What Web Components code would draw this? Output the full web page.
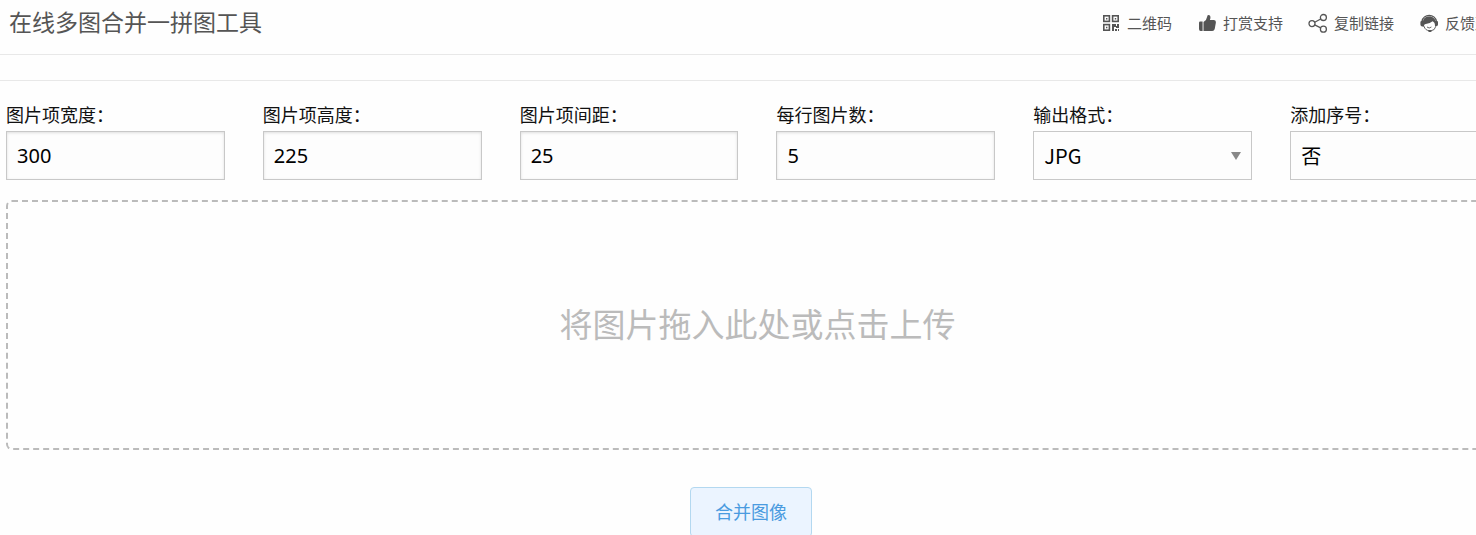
<!DOCTYPE html>
<html lang="zh-CN">
<head>
<meta charset="utf-8">
<meta name="viewport" content="width=device-width, initial-scale=1">
<title>在线多图合并一拼图工具</title>
<style>
    html{
        scrollbar-width : none;
    }
    body{
        margin : 0;
        overflow-x : clip;
        background-color : #fefefe;
        color : #111111;
        font-family : "Noto Sans", "Noto Sans CJK SC", sans-serif;
    }
</style>
</head>
<body>

<merge-page>
    <tool-header slot="header" label="在线多图合并一拼图工具">
        <tool-link icon="qrcode">二维码</tool-link>
        <tool-link icon="thumb">打赏支持</tool-link>
        <tool-link icon="share">复制链接</tool-link>
        <tool-link icon="service">反馈建议</tool-link>
    </tool-header>
    <tool-field slot="fields" label="图片项宽度：" value="300"></tool-field>
    <tool-field slot="fields" label="图片项高度：" value="225"></tool-field>
    <tool-field slot="fields" label="图片项间距：" value="25"></tool-field>
    <tool-field slot="fields" label="每行图片数：" value="5"></tool-field>
    <tool-field slot="fields" label="输出格式：" options="JPG,PNG"></tool-field>
    <tool-field slot="fields" label="添加序号：" options="否,是"></tool-field>
    <drop-zone>将图片拖入此处或点击上传</drop-zone>
    <action-button slot="actions">合并图像</action-button>
</merge-page>

<script>
"use strict";

const icons = {
    qrcode: `
        <g fill="none" stroke="currentColor" stroke-width="1.6">
            <rect x="2.8" y="2.8" width="5.6" height="5.6"/>
            <rect x="11.6" y="2.8" width="5.6" height="5.6"/>
            <rect x="2.8" y="11.6" width="5.6" height="5.6"/>
        </g>
        <path fill="currentColor" d="M5 5h1.4v1.4H5zM13.8 5h1.4v1.4h-1.4zM5 13.800h1.400v1.400H5zM11 11h4v2h1v-2h2v4h-3v-1h-2v4h-2zM14 16h2v2h-2zM17 16h1v2h-1z"/>`,
    thumb: `
        <path fill="currentColor" d="M2.8 8.500h2.800v9.500H3.600Q2 18 2 16V10Q2 8.500 2.800 8.500zM6.500 9Q9.800 7 10.200 3.400Q10.400 2 11.600 2Q13.800 2.300 13.400 5.200L12.900 7H17Q19.200 7.200 18.900 9.600L17.700 16Q17.200 18 15.200 18H6.500z"/>`,
    share: `
        <g fill="none" stroke="currentColor" stroke-width="1.3">
            <circle cx="4" cy="10.600" r="3"/>
            <circle cx="15.400" cy="4.500" r="3"/>
            <circle cx="15.400" cy="16.200" r="3"/>
            <path d="M6.700 9.300l6-3.300M6.700 11.800l6 3"/>
        </g>`,
    service: `
        <path fill="none" stroke="currentColor" stroke-width="1.400" d="M3 8.500C4 .5 16.400 .5 17.400 8.500"/>
        <path fill="currentColor" d="M10.200 3.600C14 3.600 16 5.800 16.400 8H18Q19 8 19 9.200V11.400Q19 13 17.400 13H16C16 11.500 15.800 10 14.600 9L13.600 8.200Q10.800 10.800 5.800 11.200Q4.800 12 5 13.400H3Q1.400 13 1.400 11.400V9.200Q1.400 8 2.600 8H4C4.500 5.400 6.500 3.600 10.200 3.600z"/>
        <path fill="none" stroke="currentColor" stroke-width=".9" d="M4.800 13C6 16.500 8 17.600 10.200 17.600M8 14Q10.200 16 12.400 14M17 13Q16 17.500 11.500 18"/>
        <rect x="9.200" y="16.900" width="3.400" height="2" rx="1" fill="currentColor"/>`
};

class MergePage extends HTMLElement {
    constructor() {
        super();
        this.attachShadow({ mode: "open" });
        this.shadowRoot.innerHTML = `
            <style>
                /* the tool is slightly wider than the window */
                :host{
                    display : block;
                    width : calc(100% + 33px);
                }
                .band{
                    height : 25px;
                    border-bottom : 1px solid #e8e8e8;
                }
                main{
                    display : flex;
                    flex-direction : column;
                    gap : 20px;
                    padding : 21px 0 20px 6px;
                }
                .fields{
                    display : grid;
                    grid-template-columns : repeat(6, minmax(0, 1fr));
                    gap : 38px;
                }
                .actions{
                    display : flex;
                    justify-content : center;
                    padding : 17px 13px 0 0;
                }
            </style>
            <slot name="header"></slot>
            <div class="band"></div>
            <main>
                <div class="fields"><slot name="fields"></slot></div>
                <slot></slot>
                <div class="actions"><slot name="actions"></slot></div>
            </main>
        `;
    }
}

class ToolHeader extends HTMLElement {
    constructor() {
        super();
        this.attachShadow({ mode: "open" });
        this.shadowRoot.innerHTML = `
            <style>
                :host{
                    display : block;
                    color : #555555;
                    border-bottom : 1px solid #e8e8e8;
                }
                header{
                    display : flex;
                    justify-content : space-between;
                    align-items : flex-start;
                    height : 41px;
                    padding : 13px 4px 0 9px;
                }
                h1{
                    margin : 0;
                    font-size : 23px;
                    line-height : 18px;
                    font-weight : 400;
                }
                nav{
                    display : flex;
                    gap : 25px;
                }
            </style>
            <header>
                <h1></h1>
                <nav><slot></slot></nav>
            </header>
        `;
    }
    connectedCallback() {
        this.shadowRoot.querySelector("h1").textContent = this.getAttribute("label");
    }
}

class ToolLink extends HTMLElement {
    constructor() {
        super();
        this.attachShadow({ mode: "open" });
        this.shadowRoot.innerHTML = `
            <style>
                :host{
                    display : block;
                }
                a{
                    display : flex;
                    align-items : center;
                    gap : 6px;
                    color : inherit;
                    font-size : 15px;
                    line-height : 20px;
                    white-space : nowrap;
                    text-decoration : none;
                }
                svg{
                    width : 20px;
                    height : 20px;
                }
            </style>
            <a href="#"><svg viewBox="0 0 20 20" aria-hidden="true"></svg><slot></slot></a>
        `;
    }
    connectedCallback() {
        this.shadowRoot.querySelector("svg").innerHTML = icons[this.getAttribute("icon")];
    }
}

// text box, or a drop-down when "options" is given
class ToolField extends HTMLElement {
    constructor() {
        super();
        this.attachShadow({ mode: "open" });
        this.shadowRoot.innerHTML = `
            <style>
                :host{
                    display : block;
                    min-width : 0;
                }
                label{
                    display : block;
                    padding-bottom : 2px;
                    font-size : 18px;
                    line-height : 27px;
                }
                .control{
                    display : grid;
                    align-items : center;
                }
                input, select{
                    grid-area : 1 / 1;
                    box-sizing : border-box;
                    width : 100%;
                    height : 49px;
                    margin : 0;
                    padding : 0 10px;
                    border : 1px solid #c8c8c8;
                    border-radius : 0;
                    background-color : #fdfdfd;
                    color : #000000;
                    font-family : inherit;
                    font-size : 20px;
                    appearance : none;
                }
                input{
                    box-shadow : inset 0 1px 3px #00000020;
                }
                select{
                    font-family : "Noto Sans CJK SC", sans-serif;
                }
                svg{
                    grid-area : 1 / 1;
                    justify-self : end;
                    width : 10px;
                    height : 8px;
                    margin-right : 11px;
                    fill : #888888;
                    pointer-events : none;
                }
            </style>
            <label for="control"></label>
            <div class="control"></div>
        `;
    }
    connectedCallback() {
        const options = this.getAttribute("options");
        const control = document.createElement(options ? "select" : "input");
        const wrapper = this.shadowRoot.querySelector(".control");
        control.id = "control";
        wrapper.replaceChildren(control);
        if (options) {
            options.split(",").forEach((name) => control.add(new Option(name)));
            wrapper.insertAdjacentHTML("beforeend", `<svg viewBox="0 0 10 8" aria-hidden="true"><path d="M0 0H10L5 8z"/></svg>`);
        }
        else {
            control.type = "text";
            control.value = this.getAttribute("value");
        }
        this.shadowRoot.querySelector("label").textContent = this.getAttribute("label");
    }
}

class DropZone extends HTMLElement {
    constructor() {
        super();
        this.attachShadow({ mode: "open" });
        this.shadowRoot.innerHTML = `
            <style>
                :host{
                    display : block;
                }
                button{
                    box-sizing : border-box;
                    display : block;
                    width : 100%;
                    min-height : 250px;
                    padding : 0;
                    border : 2px dashed #bbbbbb;
                    border-radius : 6px;
                    background : none;
                    color : #bbbbbb;
                    font-family : inherit;
                    font-size : 33px;
                    line-height : 48px;
                    cursor : pointer;
                }
            </style>
            <button type="button"><slot></slot></button>
            <input type="file" accept="image/*" multiple hidden>
        `;
        const input = this.shadowRoot.querySelector("input");
        this.shadowRoot.querySelector("button").addEventListener("click", () => input.click());
        this.addEventListener("dragover", (e) => e.preventDefault());
        this.addEventListener("drop", (e) => {
            e.preventDefault();
            input.files = e.dataTransfer.files;
        });
    }
}

class ActionButton extends HTMLElement {
    constructor() {
        super();
        this.attachShadow({ mode: "open" });
        this.shadowRoot.innerHTML = `
            <style>
                :host{
                    display : block;
                }
                button{
                    padding : 11px 24px;
                    border : 1px solid #b3d8f0;
                    border-radius : 4px;
                    background-color : #ebf4ff;
                    color : #4a9be0;
                    font-family : inherit;
                    font-size : 18px;
                    line-height : 26px;
                    cursor : pointer;
                }
            </style>
            <button type="button"><slot></slot></button>
        `;
    }
}

customElements.define("merge-page", MergePage);
customElements.define("tool-header", ToolHeader);
customElements.define("tool-link", ToolLink);
customElements.define("tool-field", ToolField);
customElements.define("drop-zone", DropZone);
customElements.define("action-button", ActionButton);
</script>
</body>
</html>
